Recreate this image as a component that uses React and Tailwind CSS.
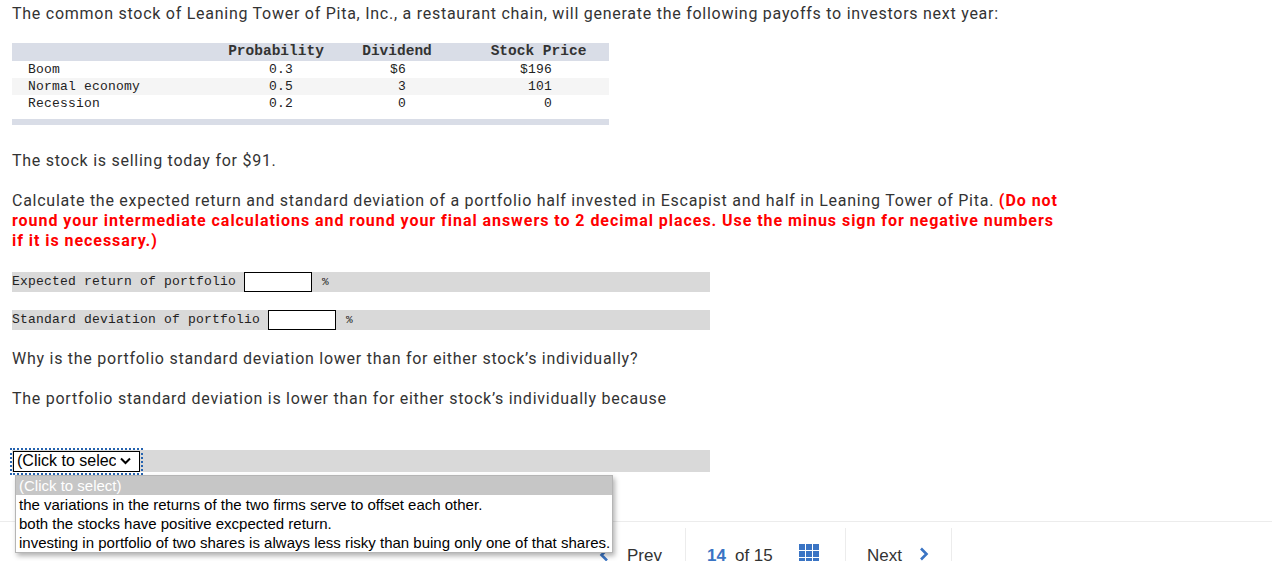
import React from "react";

const mono = { fontFamily: '"Liberation Mono", "DejaVu Sans Mono", monospace' };

function TableRow({ label, p, d, s, bg }) {
  return (
    <div className={`flex h-[17px] items-center text-[13px] tracking-[0.2px] text-[#222] ${bg}`} style={mono}>
      <div className="w-[200px] pl-[16px] whitespace-pre">{label}</div>
      <div className="w-[128px] pr-[47px] text-right">{p}</div>
      <div className="w-[114px] pr-[48px] text-right">{d}</div>
      <div className="w-[155px] pr-[57px] text-right">{s}</div>
    </div>
  );
}

function GridIcon() {
  return (
    <svg width="20" height="20" viewBox="0 0 20 20">
      {[0, 7, 14].map((y) =>
        [0, 7, 14].map((x) => <rect key={`${x}-${y}`} x={x} y={y} width="6" height="6" fill="#3a74c4" />)
      )}
    </svg>
  );
}

export default function App() {
  return (
    <div
      className="relative h-[561px] w-[1272px] overflow-hidden bg-white text-[#333]"
      style={{ fontFamily: 'Roboto, "Open Sans", sans-serif' }}
    >
      <div className="px-3">
        <p className="pt-[4px] text-[16px] leading-[20px] tracking-[0.74px]">
          The common stock of Leaning Tower of Pita, Inc., a restaurant chain, will generate the following payoffs to investors next year:
        </p>

        {/* table */}
        <div className="mt-[19px] w-[597px]">
          <div className="flex h-[18px] items-center bg-[#d9dde7] text-[14.5px] font-bold text-[#333]" style={mono}>
            <div className="w-[200px]" />
            <div className="w-[128px] text-center">Probability</div>
            <div className="w-[114px] text-center">Dividend</div>
            <div className="w-[155px] pl-[14px] text-center">Stock Price</div>
          </div>
          <TableRow label="Boom" p="0.3" d="$6" s="$196" bg="bg-white" />
          <TableRow label="Normal economy" p="0.5" d="3" s="101" bg="bg-[#f5f5f5]" />
          <TableRow label="Recession" p="0.2" d="0" s="0" bg="bg-white" />
          <div className="mt-[7px] h-[6px] bg-[#d9dde7]" />
        </div>

        <p className="mt-[26px] text-[16px] leading-[20px] tracking-[0.74px]">The stock is selling today for $91.</p>

        <p className="mt-[20px] w-[1050px] text-[16px] leading-[20px] tracking-[0.74px]">
          Calculate the expected return and standard deviation of a portfolio half invested in Escapist and half in Leaning Tower of Pita.{" "}
          <span className="font-bold tracking-[0.95px] text-[#f00]">
            (Do not round your intermediate calculations and round your final answers to 2 decimal places. Use the minus sign for negative numbers if it is necessary.)
          </span>
        </p>

        <div className="mt-[21px] flex h-[20px] w-[698px] items-center bg-[#d9d9d9] text-[13px] tracking-[0.2px] text-[#222]" style={mono}>
          <span>Expected return of portfolio</span>
          <span className="ml-[8px] h-[20px] w-[68px] border border-black bg-white" />
          <span className="ml-[10px] text-[11px]">%</span>
        </div>

        <div className="mt-[18px] flex h-[20px] w-[698px] items-center bg-[#d9d9d9] text-[13px] tracking-[0.2px] text-[#222]" style={mono}>
          <span>Standard deviation of portfolio</span>
          <span className="ml-[8px] h-[20px] w-[68px] border border-black bg-white" />
          <span className="ml-[10px] text-[11px]">%</span>
        </div>

        <p className="mt-[19px] text-[16px] leading-[20px] tracking-[0.74px]">Why is the portfolio standard deviation lower than for either stock’s individually?</p>
        <p className="mt-[20px] text-[16px] leading-[20px] tracking-[0.74px]">The portfolio standard deviation is lower than for either stock’s individually because</p>

        <div className="mt-[41px] flex h-[22px] w-[698px] items-center bg-[#d9d9d9]">
          <div className="ml-[1px] outline-dotted outline-2 outline-offset-[1px] outline-[#2563b0]">
            <div
              className="flex h-[21px] w-[127px] items-center overflow-hidden border border-black bg-white pl-[3px] text-[16px] text-black"
              style={{ fontFamily: '"Liberation Sans", Arial, sans-serif' }}
            >
              <span className="w-[99px] overflow-hidden whitespace-nowrap">(Click to select)</span>
              <svg className="ml-[4px]" width="11" height="8" viewBox="0 0 11 8">
                <path d="M1 1.5 L5.5 6 L10 1.5" stroke="black" strokeWidth="2" fill="none" />
              </svg>
            </div>
          </div>
        </div>
      </div>

      {/* bottom nav */}
      <div className="absolute left-0 right-0 top-[521px] border-t border-[#ececec]">
        <div className="flex h-[60px] items-stretch text-[17px] text-[#333]" style={{ fontFamily: '"Liberation Sans", Arial, sans-serif' }}>
          <div className="flex w-[685px] items-start justify-end pr-[23px] pt-[21px]">
            <svg className="mr-[18px] mt-[5px]" width="10" height="14" viewBox="0 0 10 14">
              <path d="M8 1.5 L2.5 7 L8 12.5" stroke="#3a74c4" strokeWidth="2.6" fill="none" />
            </svg>
            <span>Prev</span>
          </div>
          <div className="mt-[6px] flex w-[160px] items-start border-l border-[#ececec] pl-[21px] pt-[15px]">
            <span className="font-bold text-[#3a74c4]">14</span>
            <span className="ml-[9px]">of 15</span>
            <span className="ml-[26px] mt-[1px]"><GridIcon /></span>
          </div>
          <div className="mt-[6px] flex w-[107px] items-start border-x border-[#ececec] pl-[21px] pt-[15px]">
            <span>Next</span>
            <svg className="ml-[17px] mt-[4px]" width="10" height="14" viewBox="0 0 10 14">
              <path d="M2 1.5 L7.5 7 L2 12.5" stroke="#3a74c4" strokeWidth="2.6" fill="none" />
            </svg>
          </div>
        </div>
      </div>

      {/* open dropdown */}
      <div
        className="absolute left-[15px] top-[475px] w-[598px] border border-[#b5b5b5] bg-white text-[15px] leading-[19px] text-black shadow-[2px_3px_5px_rgba(0,0,0,0.3)]"
        style={{ fontFamily: '"Liberation Sans", Arial, sans-serif' }}
      >
        <div className="bg-[#c6c6c6] pl-[3px] text-white">(Click to select)</div>
        <div className="pl-[3px]">the variations in the returns of the two firms serve to offset each other.</div>
        <div className="pl-[3px]">both the stocks have positive excpected return.</div>
        <div className="pl-[3px]">investing in portfolio of two shares is always less risky than buing only one of that shares.</div>
      </div>
    </div>
  );
}
